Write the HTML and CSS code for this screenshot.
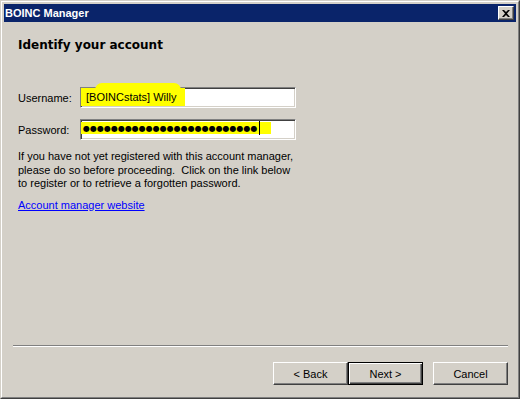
FILE: index.html
```html
<!DOCTYPE html>
<html lang="en">
  <head>
    <meta charset="UTF-8" />
    <title>BOINC Manager</title>
    <link rel="stylesheet" href="styles.css">
  </head>
  <body>
    <div class="window">
      <div class="frame">
        <!-- title bar -->
        <div class="titlebar">
          <span class="title">BOINC Manager</span>
          <button class="close" type="button">
            <svg width="8" height="7" viewBox="0 0 8 7">
              <path d="M0 0h2l2 2 2-2h2L5 3.5 8 7H6L4 5 2 7H0l3-3.5z" fill="#000" />
            </svg>
          </button>
        </div>

        <div class="content">
          <h1>Identify your account</h1>

          <div class="form">
            <div class="row">
              <label class="label">Username:</label>
              <div class="field">
                <span class="mark mark-top">[BOINCstats] Willy</span>
              </div>
            </div>
            <div class="row">
              <label class="label">Password:</label>
              <div class="field">
                <span class="mark dots"><span>●●●●●●●●●●●●●●●●●●●●●●●●●</span><span class="caret"></span></span>
              </div>
            </div>
          </div>

          <p class="info">
            If you have not yet registered with this account manager,<br />
            please do so before proceeding.&nbsp; Click on the link below<br />
            to register or to retrieve a forgotten password.
          </p>

          <a href="#" class="link">Account manager website</a>
        </div>

        <!-- buttons -->
        <div class="footer">
          <div class="separator"></div>
          <div class="buttons">
            <button class="button" type="button">&lt; Back</button>
            <button class="button default" type="button">Next &gt;</button>
            <button class="button cancel" type="button">Cancel</button>
          </div>
        </div>
      </div>
    </div>
  </body>
</html>
```

FILE: styles.css
```css
body {
  margin: 0;
  font-family: "Liberation Sans", Arial, sans-serif;
  font-size: 11px;
  color: #000;
  background: #d4d0c8;
}
.window {
  width: 520px;
  height: 399px;
  box-sizing: border-box;
  border: 1px solid;
  border-color: #d4d0c8 #404040 #404040 #d4d0c8;
}
.frame {
  height: 100%;
  box-sizing: border-box;
  border: 1px solid;
  border-color: #fff #808080 #808080 #fff;
  padding: 2px;
  display: flex;
  flex-direction: column;
}
.titlebar {
  height: 18px;
  background: #0a246a; /* classic title blue */
  color: #fff;
  display: flex;
  align-items: center;
  justify-content: space-between;
  padding: 0 2px 0 1px;
  flex-shrink: 0;
}
.title {
  font-weight: bold;
  font-size: 11px;
}
.close {
  width: 16px;
  height: 14px;
  padding: 0;
  background: #d4d0c8;
  border: 1px solid;
  border-color: #fff #404040 #404040 #fff;
  box-shadow: inset -1px -1px #808080;
  display: flex;
  align-items: center;
  justify-content: center;
}
.close svg {
  display: block;
  margin-left: -1px;
}
.content {
  flex: 1;
  padding: 15px 0 0 14px;
}
h1 {
  margin: 0 0 34px 0;
  font-family: "DejaVu Sans", Verdana, sans-serif;
  font-size: 12px;
  font-weight: bold;
  line-height: 16px;
}
.form {
  display: flex;
  flex-direction: column;
  gap: 11px;
}
.row {
  display: flex;
  align-items: center;
}
.label {
  width: 51px;
  text-align: right;
  margin-right: 11px;
}
.field {
  width: 216px;
  height: 21px;
  box-sizing: border-box;
  background: #fff;
  border: 1px solid;
  border-color: #808080 #fff #fff #808080;
  box-shadow: inset 1px 1px #404040, inset -1px -1px #d4d0c8;
  padding: 2px 0 2px 0;
  display: flex;
}
.mark {
  position: relative;
  background: #ffff00; /* highlighter */
  display: flex;
  align-items: center;
  padding: 0 5px 0 5px;
  white-space: nowrap;
}
.mark-top {
  width: 94px;
  margin-top: -2px;
  margin-bottom: -1px;
}
.mark-top::before {
  content: "";
  position: absolute;
  left: 14px;
  top: -5px;
  width: 86px;
  height: 7px;
  background: #ffff00;
  border-radius: 40px 40px 0 0;
}
.dots {
  width: 188px;
  padding: 0 0 0 2px;
  font-family: "DejaVu Sans", sans-serif;
  font-size: 8px;
  letter-spacing: 0;
  margin-bottom: 3px;
}
.caret {
  width: 1px;
  height: 14px;
  background: #000;
  margin-left: 1px;
  flex-shrink: 0;
}
.info {
  margin: 10px 0 0 0;
  line-height: 13.5px;
}
.link {
  display: inline-block;
  margin-top: 8px;
  color: #0000ff;
}
.footer {
  flex-shrink: 0;
  padding: 0 8px 10px 9px;
}
.separator {
  height: 1px;
  background: #808080;
  border-bottom: 1px solid #fff;
}
.buttons {
  margin-top: 15px;
  display: flex;
  justify-content: flex-end;
}
.button {
  width: 75px;
  height: 23px;
  padding: 0;
  font-family: "Liberation Sans", Arial, sans-serif;
  font-size: 11px;
  color: #000;
  background: #d4d0c8;
  border: 1px solid;
  border-color: #fff #404040 #404040 #fff;
  box-shadow: inset -1px -1px #808080;
}
.button.default {
  border-color: #000;
  box-shadow: inset 1px 1px #fff, inset -1px -1px #404040, inset -2px -2px #808080;
}
.button.cancel {
  margin-left: 10px;
}
```
